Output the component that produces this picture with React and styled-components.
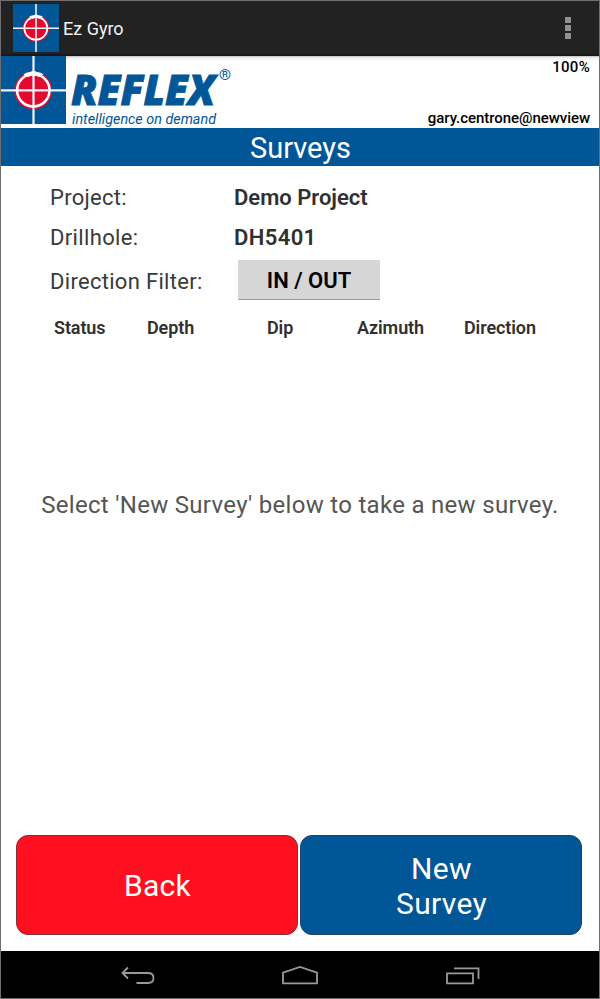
import React from "react";
import styled, { createGlobalStyle } from "styled-components";

const BLUE = "#005696";

const GlobalStyle = createGlobalStyle`
  * { box-sizing: border-box; }
  body { margin: 0; background: #fff; font-family: Roboto, sans-serif; }
`;

const Screen = styled.div`
  width: 600px;
  height: 999px;
  border: 1px solid #6e6e6e;
  background: #fff;
  display: flex;
  flex-direction: column;
  overflow: hidden;
`;

const Label = styled.span`
  display: block;
  white-space: nowrap;
  font-size: ${(p) => p.$size}px;
  line-height: ${(p) => p.$line || p.$size}px;
  font-weight: ${(p) => p.$weight || 400};
  letter-spacing: ${(p) => p.$spacing || 0}px;
  color: ${(p) => p.$color || "#303030"};
`;

const ActionBar = styled.header`
  height: 55px;
  flex: none;
  display: flex;
  align-items: center;
  gap: 4px;
  padding: 0 28px 0 12px;
  background: #222;
  border-bottom: 2px solid #181818;
`;

const AppName = styled(Label)`
  padding-top: 2px;
`;

const OverflowMenu = styled.button`
  margin-left: auto;
  padding: 0;
  border: 0;
  background: none;
  display: grid;
  gap: 2px;
`;

const Dot = styled.span`
  width: 6px;
  height: 6px;
  background: #929292;
`;

const Brand = styled.section`
  height: 72px;
  flex: none;
  display: flex;
  background: linear-gradient(#b4b4b4 0, #e4e4e4 1px, #f7f7f7 3px, #fff 6px);
`;

const Account = styled.div`
  margin-left: auto;
  display: flex;
  flex-direction: column;
  align-items: flex-end;
  justify-content: space-between;
  padding: 1px 9px 0 0;
`;

const TitleBar = styled.div`
  height: 38px;
  flex: none;
  display: flex;
  align-items: center;
  justify-content: center;
  padding: 2px 0 0 1px;
  background: ${BLUE};
`;

const Details = styled.div`
  display: grid;
  grid-template-columns: 184px 1fr;
  grid-template-rows: 40px 40px 48px;
  align-items: center;
  padding: 12px 0 0 49px;
`;

const FilterButton = styled.button`
  width: 142px;
  height: 40px;
  margin: 0 0 4px 4px;
  padding: 3px 0 0;
  border: 0;
  border-bottom: 1px solid #999;
  border-radius: 1px;
  background: #d6d6d6;
  font-family: inherit;
  display: flex;
  align-items: center;
  justify-content: center;
`;

const TableHead = styled.div`
  display: grid;
  grid-template-columns: 93px 120px 90px 107px auto;
  padding: 13px 0 0 53px;
`;

const EmptyState = styled.div`
  flex: 1;
  padding-top: 156px;
  display: flex;
  justify-content: center;
`;

const Actions = styled.div`
  flex: none;
  display: grid;
  grid-template-columns: 282px 282px;
  gap: 2px;
  padding: 0 0 16px 15px;
`;

const ActionButton = styled.button`
  height: 100px;
  padding: 1px 0 0 1px;
  border: 1px solid ${(p) => p.$edge};
  border-radius: 12px;
  background: ${(p) => p.$fill};
  font-family: inherit;
  display: flex;
  flex-direction: column;
  align-items: center;
  justify-content: center;
`;

const NavBar = styled.nav`
  height: 47px;
  flex: none;
  display: grid;
  grid-template-columns: repeat(3, 162px);
  justify-content: center;
  padding-top: 3px;
  background: #000;
`;

const NavButton = styled.button`
  padding: 0;
  border: 0;
  background: none;
  display: grid;
  place-items: center;
`;

const Icon = styled.svg`
  display: block;
  flex: none;
`;

function Target({ width, height }) {
  return (
    <Icon width={width} height={height} viewBox="0 0 65 68" preserveAspectRatio="none">
      <rect width="65" height="68" fill={BLUE} />
      <circle cx="32.3" cy="34.5" r="19" fill="#e3092f" />
      <path d="M32.5 0V68M0 34.3H65" stroke="#f2f6fa" strokeWidth="2.2" />
      <circle cx="32.3" cy="34.3" r="16.2" fill="none" stroke="#fff" strokeWidth="2.5" />
      <path d="M22.5 18.5Q25 16 29 16Q32.5 14 36 16Q40 16 42.5 18.5L38 21Q32.5 18.5 27 21Z" fill="#fff" />
    </Icon>
  );
}

function Wordmark() {
  return (
    <Icon width="170" height="72" viewBox="66 56 170 72">
      <text x="71" y="105" fontFamily="'Open Sans', sans-serif" fontWeight="800" fontStyle="italic" fontSize="43" textLength="144" lengthAdjust="spacingAndGlyphs" fill={BLUE} stroke={BLUE} strokeWidth="0.8">REFLEX</text>
      <text x="219" y="80" fontFamily="Roboto, sans-serif" fontSize="15" textLength="12" lengthAdjust="spacingAndGlyphs" fill={BLUE}>®</text>
      <text x="72" y="123.5" fontFamily="Roboto, sans-serif" fontStyle="italic" fontSize="15" textLength="144" lengthAdjust="spacingAndGlyphs" fill={BLUE}>intelligence on demand</text>
    </Icon>
  );
}

const columns = ["Status", "Depth", "Dip", "Azimuth", "Direction"];

export default function App() {
  return (
    <Screen>
      <GlobalStyle />
      <ActionBar>
        <Target width={46} height={48} />
        <AppName $size={18} $color="#f2f2f2">Ez Gyro</AppName>
        <OverflowMenu aria-label="More options"><Dot /><Dot /><Dot /></OverflowMenu>
      </ActionBar>
      <Brand>
        <Target width={65} height={68} />
        <Wordmark />
        <Account>
          <Label $size={15} $line={20} $weight={500} $spacing={0.3} $color="#000">100%</Label>
          <Label $size={15} $line={20} $weight={500} $spacing={-0.05} $color="#000">gary.centrone@newview</Label>
        </Account>
      </Brand>
      <TitleBar><Label $size={29} $color="#fff">Surveys</Label></TitleBar>
      <Details>
        <Label $size={22} $spacing={0.27} $color="#3a3a3a">Project:</Label>
        <Label $size={22} $weight={600}>Demo Project</Label>
        <Label $size={22} $spacing={0.35} $color="#3a3a3a">Drillhole:</Label>
        <Label $size={22} $weight={600} $spacing={0.4}>DH5401</Label>
        <Label $size={22} $spacing={0.3} $color="#3a3a3a">Direction Filter:</Label>
        <FilterButton><Label $size={22} $weight={600} $color="#000">IN / OUT</Label></FilterButton>
      </Details>
      <TableHead>
        {columns.map((name) => <Label key={name} $size={18} $weight={600} $spacing={-0.1}>{name}</Label>)}
      </TableHead>
      <EmptyState><Label $size={24} $spacing={0.3} $color="#555">Select 'New Survey' below to take a new survey.</Label></EmptyState>
      <Actions>
        <ActionButton $fill="#ff1020" $edge="#803038"><Label $size={30} $line={35} $spacing={0.3} $color="#fff">Back</Label></ActionButton>
        <ActionButton $fill={BLUE} $edge="#24405a">
          <Label $size={30} $line={35} $spacing={0.3} $color="#fff">New</Label>
          <Label $size={30} $line={35} $spacing={0.3} $color="#fff">Survey</Label>
        </ActionButton>
      </Actions>
      <NavBar>
        <NavButton aria-label="Back">
          <Icon width="36" height="20" viewBox="0 0 36 20" fill="none" stroke="#999" strokeWidth="1.8"><path d="M8 1.5L2.5 7L8 12.5M2.5 7H28Q33.5 7 33.5 12T28 17H16.5" /></Icon>
        </NavButton>
        <NavButton aria-label="Home">
          <Icon width="36" height="20" viewBox="0 0 36 20" fill="none" stroke="#999" strokeWidth="1.8"><path d="M1 17.3V6.7L18 1L35 6.7V17.3Z" /></Icon>
        </NavButton>
        <NavButton aria-label="Recent apps">
          <Icon width="36" height="20" viewBox="0 0 36 20" fill="none" stroke="#999" strokeWidth="1.8"><path d="M3 7.3H29V17.3H3ZM10 2.3H34.5V13" /></Icon>
        </NavButton>
      </NavBar>
    </Screen>
  );
}
